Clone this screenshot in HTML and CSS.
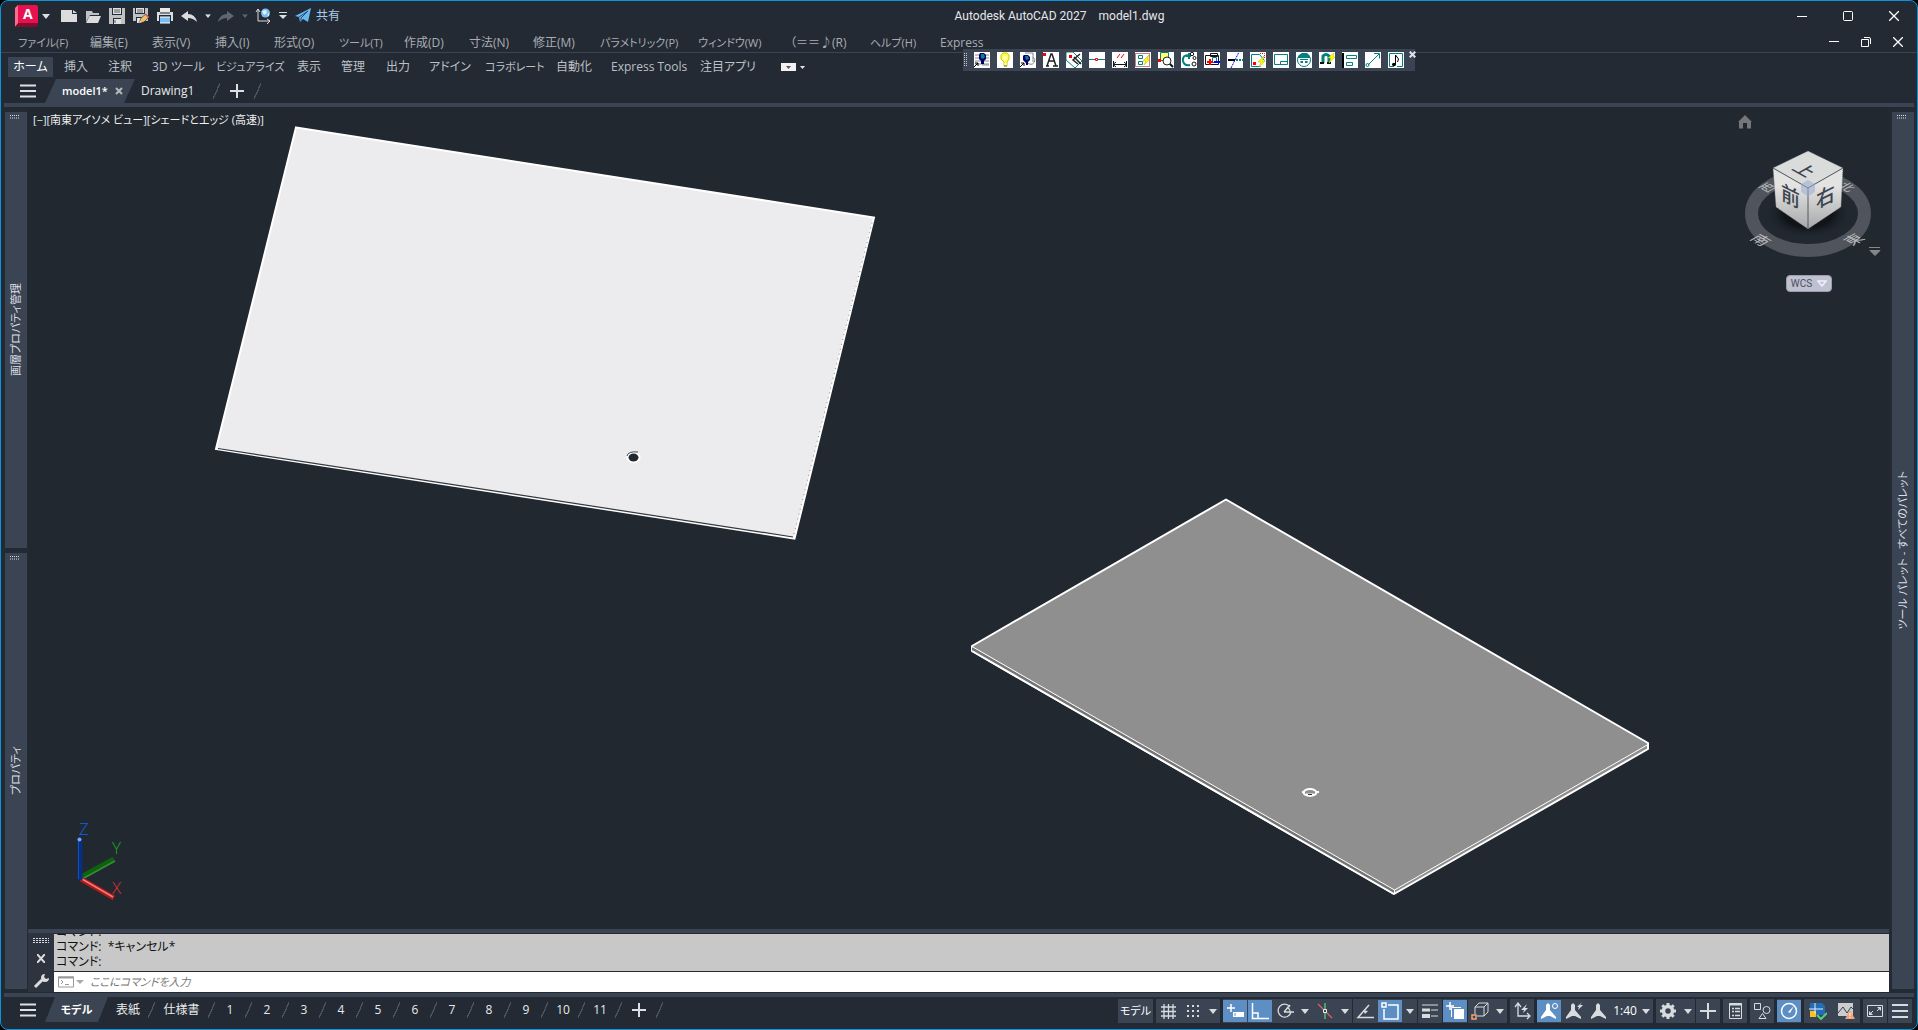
FILE: index.html
```html
<!DOCTYPE html>
<html lang="ja">
<head>
<meta charset="utf-8">
<title>Autodesk AutoCAD 2027 model1.dwg</title>
<link rel="stylesheet" href="styles.css">
</head>
<body>
<svg class="defs" aria-hidden="true">
  <symbol id="down" viewBox="0 0 8 5"><path d="M0 0h8L4 5z" fill="currentColor"/></symbol>
  <symbol id="bars" viewBox="0 0 16 14"><path d="M0 1.500h16M0 7h16M0 12.500h16" stroke="currentColor" stroke-width="2"/></symbol>
  <symbol id="plus" viewBox="0 0 14 14"><path d="M7 0v14M0 7h14" stroke="currentColor" stroke-width="2"/></symbol>
  <symbol id="cross" viewBox="0 0 10 10"><path d="M0 0L10 10M10 0L0 10" stroke="currentColor" stroke-width="1.300"/></symbol>
  <symbol id="grip" viewBox="0 0 10 4"><path d="M0 .5h10M0 3h10" stroke="currentColor" stroke-dasharray="1 1"/></symbol>
  <symbol id="person" viewBox="0 0 18 18"><path d="M8 1l2 2v5l6 7v2l-6-3H7l-6 3v-2l5-7V3z" fill="currentColor"/></symbol>
</svg>
<div class="window">
  <header class="titlebar">
    <button class="logo" aria-label="アプリケーション メニュー"><svg width="24" height="23" viewBox="0 0 24 23"><path d="M0 3l3-3v19l-3 3z" fill="#ff6b8b"/><path d="M3 0h18q2 0 2 2v16H3z" fill="#e8114f"/><path d="M0 22l3-4h20v2q0 2-2 2z" fill="#820b30"/><text x="8" y="14" class="logo-letter">A</text></svg></button>
    <button class="drop" aria-label="メニュー"><svg width="8" height="5"><use href="#down"/></svg></button>
    <div class="quick">
      <button aria-label="新規"><svg viewBox="0 0 16 16"><path d="M0 2h11v4h5v8H0z" fill="#dcdcdc"/><path d="M12 2l4 3h-4z" fill="#dcdcdc"/></svg></button>
      <button aria-label="開く"><svg viewBox="0 0 16 16"><path d="M1 14V3h6l1 2h6v2H5z" fill="#bfc1c4"/><path d="M4.500 8H16l-3 7H1z" fill="#dcdcdc"/></svg></button>
      <button aria-label="保存"><svg viewBox="0 0 16 16"><path d="M0 0h16v16H0z" fill="#bfc1c4"/><path d="M3 0h10v7H3zM4 10h8v6H4z" fill="#232a34"/><path d="M4 0h8v6H4zM5 11h7v5H5z" fill="#e2e2e2"/><path d="M5 2h6M5 4h6M6 12v3" stroke="#555c66"/></svg></button>
      <button aria-label="名前を付けて保存"><svg viewBox="0 0 16 16"><path d="M0 0h15v13H0z" fill="#bfc1c4"/><path d="M2 0h10v6H2zM3 9h7v6H3z" fill="#232a34"/><path d="M3 0h8v5H3zM4 10h5v5H4z" fill="#e2e2e2"/><path d="M4 2h6M4 4h6" stroke="#555c66"/><path d="M6 15l2-5 5-4 3 3-5 5z" fill="#f1bc65" stroke="#232a34" stroke-width=".6"/><path d="M12 7l1-1 3 3-1 1z" fill="#ed5b65"/><path d="M6 15l1-2 1 1z" fill="#fff"/></svg></button>
      <button aria-label="印刷"><svg viewBox="0 0 16 16"><path d="M3 0h10v5H3z" fill="#e8e8e8"/><path d="M0 4h16v9H0z" fill="#dedede"/><path d="M2 7h12v9H2z" fill="#232a34"/><path d="M3 5h10" stroke="#232a34"/><path d="M3 9h10v6H3z" fill="#78bdf4"/><path d="M3 9h10M3 15h10" stroke="#fff"/></svg></button>
      <button aria-label="元に戻す"><svg viewBox="0 0 16 16"><path d="M0 8l7-5v3q7 0 9 8-4-4-9-4v3z" fill="#dcdcdc"/></svg></button>
      <button class="small" aria-label="履歴"><svg viewBox="0 0 8 5"><use href="#down"/></svg></button>
      <button class="muted" aria-label="やり直し"><svg viewBox="0 0 16 16"><path d="M16 8L9 3v3Q2 6 0 14q4-4 9-4v3z" fill="currentColor"/></svg></button>
      <button class="small muted" aria-label="履歴"><svg viewBox="0 0 8 5"><use href="#down"/></svg></button>
      <button aria-label="UCS ワールド"><svg viewBox="0 0 16 16"><circle cx="10.500" cy="5" r="4.500" fill="#79bfed"/><path d="M7 3l4-1 1 3-3 2zM12 7l2-2v3z" fill="#dff2ff"/><path d="M3 1v12h12M1 4l2-3 2 3M12 11l3 2-3 3" fill="none" stroke="#dcdcdc"/></svg></button>
      <button class="custom" aria-label="カスタマイズ"><svg viewBox="0 0 8 8"><path d="M0 .5h8" stroke="currentColor"/><path d="M0 3h8L4 7z" fill="currentColor"/></svg></button>
      <button class="share"><svg viewBox="0 0 16 16"><path d="M0 8L16 0l-3 14-5-3-3 3-1-5z" fill="#69b8f0"/><path d="M4 9l9-6-7 7v4" fill="none" stroke="#235075"/></svg>共有</button>
    </div>
    <h1 class="caption"><span>Autodesk AutoCAD 2027</span><span>model1.dwg</span></h1>
    <div class="winctl">
      <button aria-label="最小化"><svg width="10" height="10"><path d="M0 5.500h10" stroke="#fff"/></svg></button>
      <button aria-label="最大化"><svg width="10" height="10"><rect x=".5" y=".5" width="9" height="9" rx="1" fill="none" stroke="#fff"/></svg></button>
      <button aria-label="閉じる"><svg width="10" height="10"><use href="#cross"/></svg></button>
    </div>
  </header>

  <nav class="menubar">
    <div class="menus">
      <button class="kana">ファイル(F)</button><button>編集(E)</button><button>表示(V)</button><button>挿入(I)</button><button>形式(O)</button><button class="kana">ツール(T)</button><button>作成(D)</button><button>寸法(N)</button><button>修正(M)</button><button class="kana">パラメトリック(P)</button><button class="kana">ウィンドウ(W)</button><button class="face">（＝＝♪(R)</button><button class="kana">ヘルプ(H)</button><button>Express</button>
    </div>
    <div class="winctl docctl">
      <button aria-label="最小化"><svg width="10" height="10"><path d="M0 4.500h10" stroke="#fff"/></svg></button>
      <button aria-label="元に戻す"><svg width="10" height="10"><path d="M.5 2.500h7v7h-7zM3 .5h5q1.500 0 1.500 1.500v5" fill="none" stroke="#fff"/></svg></button>
      <button aria-label="閉じる"><svg width="10" height="10"><use href="#cross"/></svg></button>
    </div>
    <div class="floatbar">
      <svg class="bargrip" width="3" height="14"><path d="M.5 0v14M2.500 0v14" stroke="#c9ccd1" stroke-dasharray="1 1"/></svg>
      <button aria-label="画層 1"><svg viewBox="0 0 16 16"><path d="M1 3h14M1 6h14M1 9h14M1 12h14M8 13h7" stroke="#888"/><path d="M6 1h4l2 2v4l-2 2v3H7v-3L5 7V3z" fill="#00006e"/><path d="M7 2h3l1 3-2 2-2-1z" fill="#078485"/><path d="M0 15l4-4M1 11h3v3" stroke="#000" fill="none"/></svg></button>
      <button aria-label="点灯"><svg viewBox="0 0 16 16"><path d="M6 1h4l2 2v4l-2 3v4H7v-4L4 7V3z" fill="#ffff5a" stroke="#caca00"/><path d="M6 5h4M6 7h4M7 12h3" stroke="#fff"/><path d="M7 14h3" stroke="#777"/></svg></button>
      <button aria-label="画層 2"><svg viewBox="0 0 16 16"><path d="M5 1h8v9M7 7a4 4 0 1 0 6-2" stroke="#888" fill="none"/><path d="M4 3h4l2 2v3l-2 2v3H6v-2L3 8V4z" fill="#00006e"/><path d="M5 4h3l1 3-3 1z" fill="#078485"/><path d="M0 15l4-4M1 11h3v3" stroke="#000" fill="none"/></svg></button>
      <button aria-label="文字"><svg viewBox="0 0 16 16"><path d="M0 1h3v3H0z" fill="#f00"/><path d="M3 14h3M10 14h5M4 14L8 2h1l4 12M6 9h5" stroke="#222" fill="none" stroke-width="1.500"/></svg></button>
      <button aria-label="回転"><svg viewBox="0 0 16 16"><path d="M0 0h7l9 9-7 7-9-8z" fill="#fff" stroke="#058080"/><path d="M14 2L7 8l5 4M8 5l7 7" stroke="#222" fill="none" stroke-width="1.500"/><path d="M3 3h3v3H3z" fill="#f00"/></svg></button>
      <button aria-label="中点"><svg viewBox="0 0 16 16"><path d="M0 7.500h16" stroke="#058080"/><path d="M6.500 6.500h2v2h-2z" fill="#fff" stroke="red"/></svg></button>
      <button aria-label="寸法"><svg viewBox="0 0 16 16"><path d="M1.500 9v6M14.500 9v6M2 12.500h12M4 10l-3 2.500L4 15M12 10l3 2.500-3 2.500" fill="none" stroke="#111"/><path d="M5 6l3-4M9 6l3-4" stroke="red"/></svg></button>
      <button aria-label="選択"><svg viewBox="0 0 16 16"><path d="M.5 1.500h14v13H.5z" fill="none" stroke="#8a0000" stroke-dasharray="1 1"/><path d="M3.500 3.500h4v3h-4zM3.500 9.500h4v3h-4z" fill="none" stroke="#058080"/><path d="M14 3L8 9h3l-2 4 6-6h-3z" fill="#ff0" stroke="#b5b500" stroke-width=".5"/></svg></button>
      <button aria-label="検索"><svg viewBox="0 0 16 16"><path d="M2.500.5h8v8h-8z" fill="#ffff70" stroke="#058080"/><circle cx="9" cy="9" r="4" fill="#fff" stroke="#222"/><path d="M12 12l3 3" stroke="#111" stroke-width="2"/><path d="M0 7h3v3H0z" fill="red"/></svg></button>
      <button aria-label="更新"><svg viewBox="0 0 16 16"><path d="M8 3Q1 3 2 9q1 5 7 4M8 1v6M5 4h5" fill="none" stroke="#058080" stroke-width="2"/><circle cx="11" cy="2" r="1.700" fill="none" stroke="#111"/><circle cx="13.500" cy="6" r="1.500" fill="none" stroke="#111"/><circle cx="13" cy="12" r="2" fill="none" stroke="#111"/></svg></button>
      <button aria-label="追加"><svg viewBox="0 0 16 16"><path d="M1.500 3.500h13v9h-13zM6.500 1.500h7v3h-7z" fill="none" stroke="#111"/><path d="M8.500 5.500h4v5h-4z" fill="#fff" stroke="#058080"/><path d="M6 7v6M3 10h6" stroke="red" stroke-width="2"/><path d="M10 10h6" stroke="#00f" stroke-width="2"/></svg></button>
      <button aria-label="切断"><svg viewBox="0 0 16 16"><path d="M1 8h7" stroke="#000" stroke-width="2"/><path d="M9 8h7" stroke="#058080" stroke-width="2" stroke-dasharray="2 1"/><path d="M4 16L12 0" stroke="#00d" stroke-dasharray="2 1"/></svg></button>
      <button aria-label="図形選択"><svg viewBox="0 0 16 16"><path d="M1.500 2.500h8l5 6M1.500 2.500v12h9" fill="none" stroke="#058080"/><path d="M10 1.500h4.500v5" fill="none" stroke="red" stroke-dasharray="1 1"/><path d="M14 4L8 10h3l-2 5 6-6h-3z" fill="#ff0" stroke="#b5b500" stroke-width=".5"/><path d="M3 10h3v3H3z" fill="red"/></svg></button>
      <button aria-label="図面枠"><svg viewBox="0 0 16 16"><path d="M1.500 2.500h13v10h-13zM7.500 12V9.500h7" fill="none" stroke="#058080"/></svg></button>
      <button aria-label="キャラクター"><svg viewBox="0 0 16 16"><circle cx="8" cy="8" r="6.500" fill="#fff" stroke="#058080"/><path d="M2 6V4l4-3h5l3 3v2z" fill="#058080"/><path d="M4 7.500h8" stroke="#058080"/><path d="M4.500 10h2.500M9 10h2.500" stroke="#058080" stroke-width="2"/></svg></button>
      <button aria-label="磁石"><svg viewBox="0 0 16 16"><path d="M4 11V4q3-3 6 0v7" fill="none" stroke="#058080" stroke-width="3"/><path d="M1 11h4M8 11h4" stroke="#111" stroke-width="2"/><path d="M15 1L9 6h3l-2 5 6-6h-2z" fill="#ff0" stroke="#c5c500" stroke-width=".5"/></svg></button>
      <button aria-label="整列"><svg viewBox="0 0 16 16"><path d="M1 1v15" stroke="#000" stroke-width="2"/><path d="M4.500 3.500h10v3h-10zM4.500 10.500h6v3h-6z" fill="none" stroke="#058080"/></svg></button>
      <button aria-label="矢印"><svg viewBox="0 0 16 16"><path d="M3 13L14 2M9 1.500h5.500v5" fill="none" stroke="#058080"/><circle cx="2.500" cy="13" r="1.500" fill="none" stroke="#058080"/></svg></button>
      <button aria-label="音符"><svg viewBox="0 0 16 16"><path d="M6 14.500H1.500v-13h13v13H9" fill="none" stroke="#058080"/><path d="M7.500 12V3l3 4-1 3" fill="none" stroke="#000"/><ellipse cx="6" cy="12.500" rx="2" ry="1.800"/></svg></button>
      <button class="barclose" aria-label="閉じる"><svg viewBox="0 0 10 10"><path d="M1 1l8 8M9 1L1 9" stroke="currentColor" stroke-width="3"/></svg></button>
    </div>
  </nav>

  <nav class="ribbon">
    <button class="on">ホーム</button><button>挿入</button><button>注釈</button><button>3D ツール</button><button class="kana">ビジュアライズ</button><button>表示</button><button>管理</button><button>出力</button><button>アドイン</button><button class="kana">コラボレート</button><button>自動化</button><button>Express Tools</button><button>注目アプリ</button>
    <button class="ribbonmin" aria-label="リボンを最小化"><svg width="25" height="8"><path d="M0 0h15v8H0z" fill="#f2f2f2"/><path d="M5 3h5L7.500 6z" fill="#555"/><path d="M19 3h5l-2.500 3z" fill="#e5e5e5"/></svg></button>
  </nav>

  <nav class="doctabs">
    <button class="burger" aria-label="図面メニュー"><svg width="16" height="14"><use href="#bars"/></svg></button>
    <button class="tab on">model1*<svg width="8" height="8"><path d="M1 1l6 6M7 1L1 7" stroke="#b5b9be" stroke-width="2"/></svg></button>
    <button class="tab drawing">Drawing1</button>
    <i class="slash"></i>
    <button class="add" aria-label="新規図面"><svg width="14" height="14"><use href="#plus"/></svg></button>
    <i class="slash"></i>
  </nav>
  <div class="strip"></div>

  <main class="workspace">
    <div class="dock">
      <aside class="palette"><svg width="10" height="4"><use href="#grip"/></svg><span>画層プロパティ管理</span></aside>
      <aside class="palette"><svg width="10" height="4"><use href="#grip"/></svg><span>プロパティ</span></aside>
    </div>
    <div class="center">
      <section class="viewport">
        <svg class="drawing-area" viewBox="28 107 1861 822" preserveAspectRatio="xMinYMin meet">
          <path d="M296 127.500L874 217.500 794.500 538.500 216 449z" fill="#ececee" stroke="#fff" stroke-width="2"/>
          <path d="M218 448.500L793 537" stroke="#33383e" stroke-width="1.200"/>
          <path d="M794 534L873 219" stroke="#8d8d90" stroke-width="1" stroke-dasharray="1 4"/>
          <ellipse cx="633.500" cy="457.500" rx="7" ry="5.500" fill="#fff"/>
          <ellipse cx="633.500" cy="457.500" rx="5" ry="4" fill="#212830"/>
          <path d="M627 456q1-5 11-4" fill="none" stroke="#444"/>
          <path d="M1226 499.500L1648 743v6l-254 145L972 651v-5z" fill="#8f8f8f" stroke="#fff" stroke-width="2" stroke-linejoin="round"/>
          <path d="M972 647l422 243v4L972 651z" fill="#747474"/>
          <path d="M972 646.500L1394.500 890 1648 744.500M1394.500 890v4" fill="none" stroke="#fff"/>
          <path d="M972 651L1394 894" stroke="#fff" stroke-width="2"/>
          <ellipse cx="1310" cy="792.500" rx="6.500" ry="3.500" fill="#8f8f8f" stroke="#fff" stroke-width="2"/>
          <path d="M1302 792h3M1315 792h4M1306 794.500h8" stroke="#fff" stroke-width="2"/><path d="M1308 794.500h4" stroke="#333"/>
          <path d="M81 877L114 859" stroke="#0d620d" stroke-width="5"/><path d="M84 878L115 861" stroke="#398b39" stroke-width="1.500"/>
          <path d="M81 879L114 898" stroke="#a41c1c" stroke-width="5"/><path d="M82 879L113 897" stroke="#ff7777" stroke-width="1.500"/>
          <path d="M80 839v41" stroke="#082e80" stroke-width="5"/><path d="M78.500 839v40" stroke="#1550b5"/><circle cx="79.500" cy="839.500" r="2" fill="#78a7ee"/>
          <g class="axis"><text x="79" y="835" fill="#0a63f5">Z</text><text x="112" y="854" fill="#17a817">Y</text><text x="112" y="894" fill="#df3030">X</text></g>
        </svg>
        <button class="viewlabel">[−][南東アイソメ ビュー][シェードとエッジ (高速)]</button>
        <div class="navcube">
          <svg class="cube" width="146" height="150" viewBox="1736 112 146 150">
            <defs><radialGradient id="glow"><stop offset=".55" stop-color="#101418"/><stop offset="1" stop-color="#212830" stop-opacity="0"/></radialGradient><linearGradient id="face" x2="0" y2="1"><stop offset=".3" stop-color="#e3e3e2"/><stop offset="1" stop-color="#a7a8a9"/></linearGradient></defs>
            <path d="M1738 122l7-7 7 7h-1v6.500h-4V123h-4v5.500h-4V122z" fill="#75777b"/>
            <ellipse cx="1808" cy="213.500" rx="56.500" ry="37" fill="none" stroke="#50545c" stroke-width="13"/>
            <ellipse cx="1808" cy="213" rx="44" ry="26" fill="url(#glow)"/>
            <g class="compass"><text class="far" transform="matrix(.75 -.42 .75 .42 1766 193)">西</text><text class="far" transform="matrix(.75 .42 -.75 .42 1837 186)">北</text><text transform="matrix(.75 .42 -.75 .42 1749 239)">南</text><text transform="matrix(.75 -.42 .75 .42 1852 246)">東</text></g>
            <path d="M1808 151l35 17-35 20-35-20z" fill="#dadcdb"/><path d="M1773 168l35 20v41l-32-22z" fill="url(#face)"/><path d="M1843 168l-35 20v41l33-22z" fill="url(#face)"/>
            <path d="M1773 168l35 20 35-20M1808 188v41" fill="none" stroke="#555b62"/>
            <path d="M1773 168l35-17 35 17-2 39-33 22-32-22z" fill="none" stroke="#656b72" stroke-width=".7" stroke-dasharray="1 1"/>
            <g class="facename"><text transform="matrix(.9 .45 0 1 1781 199)">前</text><text transform="matrix(.9 -.45 0 1 1816 209)">右</text><text transform="matrix(.75 .42 -.75 .42 1791 169)">上</text></g>
            <path d="M1808 180l7 4v8l-7 4-7-4v-8z" fill="#98acd0" opacity=".55"/>
            <path d="M1869 247.500h11M1870 250.500h10l-5 5z" fill="#85878a" stroke="#85878a"/>
          </svg>
          <button class="wcs">WCS<svg width="10" height="7"><path d="M1 1h8L5 6z" fill="none" stroke="#eef" stroke-width="1.500"/></svg></button>
        </div>
      </section>
      <section class="command">
        <div class="cmdtools">
          <svg width="18" height="5"><path d="M1 .5h16M1 2.500h16M1 4.500h16" stroke="#d5d7da" stroke-dasharray="2 1"/></svg>
          <button aria-label="閉じる"><svg width="8" height="9"><path d="M0 0l8 9M8 0L0 9" stroke="#ddd" stroke-width="2"/></svg></button>
          <button aria-label="カスタマイズ"><svg width="16" height="16"><path d="M2 14l7-7" stroke="#ddd" stroke-width="3"/><path d="M8 5q0-4 4-4l-1 3 2 2 3-1q0 4-4 4-4 0-4-4" fill="#ddd"/></svg></button>
        </div>
        <div class="cmdmain">
          <div class="history"><p>コマンド:</p><p>コマンド:&nbsp; *キャンセル*</p><p>コマンド:</p></div>
          <div class="prompt"><svg width="26" height="12"><path d="M.5 1h15v10H.5z" fill="#fff" stroke="#999"/><path d="M0 1.500h16" stroke="#999" stroke-width="2"/><path d="M3 4l2 2-2 2M7 8.500h4" fill="none" stroke="#999"/><path d="M18 4h8l-4 4z" fill="#aaa"/></svg><input aria-label="コマンド" placeholder="ここにコマンドを入力"></div>
        </div>
      </section>
    </div>
    <div class="dock right">
      <aside class="palette"><svg width="10" height="4"><use href="#grip"/></svg><span>ツール パレット - すべてのパレット</span></aside>
    </div>
  </main>
  <div class="strip low"></div>

  <footer class="status">
    <nav class="layouts">
      <button class="burger" aria-label="レイアウト メニュー"><svg width="16" height="14"><use href="#bars"/></svg></button>
      <button class="tab on">モデル</button>
      <button class="tab paper">表紙</button><i class="slash"></i>
      <button class="tab spec">仕様書</button><i class="slash"></i>
      <button class="tab num">1</button><i class="slash"></i><button class="tab num">2</button><i class="slash"></i><button class="tab num">3</button><i class="slash"></i><button class="tab num">4</button><i class="slash"></i><button class="tab num">5</button><i class="slash"></i><button class="tab num">6</button><i class="slash"></i><button class="tab num">7</button><i class="slash"></i><button class="tab num">8</button><i class="slash"></i><button class="tab num">9</button><i class="slash"></i><button class="tab num">10</button><i class="slash"></i><button class="tab num">11</button><i class="slash"></i>
      <button class="add" aria-label="新規レイアウト"><svg width="14" height="14"><use href="#plus"/></svg></button><i class="slash"></i>
    </nav>
    <div class="tools">
      <button class="model">モデル</button>
      <div class="group"><button aria-label="グリッド"><svg viewBox="0 0 18 18"><path d="M5 2v15M9.500 2v15M14 2v15M2 5h15M2 9.500h15M2 14h15" stroke="currentColor" stroke-width="1.300"/></svg></button><button aria-label="スナップ"><svg viewBox="0 0 18 18"><path d="M3 4h13M3 9h13M3 14h13" stroke="currentColor" stroke-width="2" stroke-dasharray="2 3"/></svg></button><button class="arr" aria-label="オプション"><svg viewBox="0 0 8 5"><use href="#down"/></svg></button></div>
      <div class="group wide"><button class="act" aria-label="ダイナミック入力"><svg viewBox="0 0 18 18"><path d="M5 2v8M1 6h8" stroke="currentColor" stroke-width="1.500"/><path d="M7 10h11v5H7z" fill="currentColor"/><path d="M9 11v3" stroke="#5d8fc5"/></svg></button><button class="act" aria-label="直交モード"><svg viewBox="0 0 18 18"><path d="M1.500 1v15.500H18M2 11h5v5" fill="none" stroke="currentColor" stroke-width="1.500"/></svg></button><button aria-label="極トラッキング"><svg viewBox="0 0 18 18"><path d="M14 5a6.500 6.500 0 1 0 1 5M8 10h10M8 10l6-7M11 5q3 2 3 5" fill="none" stroke="currentColor" stroke-width="1.300"/></svg></button><button class="arr" aria-label="オプション"><svg viewBox="0 0 8 5"><use href="#down"/></svg></button><button aria-label="アイソメ"><svg viewBox="0 0 18 18"><path d="M2 2l14 14" stroke="#de5e63" stroke-width="1.300"/><path d="M9 1v16" stroke="#55cf7a" stroke-width="1.300"/><path d="M7.500 7.500h3v3h-3z" fill="#3b4453" stroke="#eee"/></svg></button><button class="arr" aria-label="オプション"><svg viewBox="0 0 8 5"><use href="#down"/></svg></button></div>
      <div class="group"><button aria-label="オブジェクト スナップ トラッキング"><svg viewBox="0 0 18 18"><path d="M18 15.500H2L13 3" fill="none" stroke="currentColor" stroke-width="1.500"/><path d="M7 8l5 1-3 3z" fill="currentColor"/></svg></button><button class="act" aria-label="オブジェクト スナップ"><svg viewBox="0 0 18 18"><path d="M7 3h10v14H3V7M1 1h4v4H1z" fill="none" stroke="currentColor" stroke-width="1.500"/></svg></button><button class="arr" aria-label="オプション"><svg viewBox="0 0 8 5"><use href="#down"/></svg></button></div>
      <div class="group"><button aria-label="線の太さ"><svg viewBox="0 0 18 18"><path d="M1 3h16M10 8h7M10 14h7" stroke="currentColor"/><path d="M1 8h8" stroke="currentColor" stroke-width="3"/><path d="M1 14h8" stroke="currentColor" stroke-width="4"/></svg></button></div>
      <div class="group"><button class="act" aria-label="選択の循環"><svg viewBox="0 0 18 18"><path d="M4 0v8M0 4h8" stroke="currentColor" stroke-width="1.500"/><path d="M8 7h10v10H8z" fill="currentColor"/><path d="M5.500 15V5.500H15" fill="none" stroke="currentColor"/></svg></button></div>
      <div class="group"><button aria-label="3D オブジェクト スナップ"><svg viewBox="0 0 18 18"><path d="M4 12V5h9v9H6M4 5l4-4h9l-4 4M17 1v9l-4 4" fill="none" stroke="currentColor"/><path d="M1 13h4v4H1z" fill="#3b4453" stroke="#f2a477" stroke-width="1.500"/></svg></button><button class="arr" aria-label="オプション"><svg viewBox="0 0 8 5"><use href="#down"/></svg></button></div>
      <div class="group wide"><button aria-label="ダイナミック UCS"><svg viewBox="0 0 18 18"><path d="M5 2v12h11M2 5l3-4 3 4M14 11l3 3-3 3" fill="none" stroke="currentColor" stroke-width="1.300"/><path d="M14 2L8 8h3l-1 3 5-5h-3z" fill="currentColor"/></svg></button></div>
      <div class="group wide"><button class="act" aria-label="注釈の表示"><svg viewBox="0 0 18 18"><use href="#person"/><circle cx="15" cy="4" r="2.500" fill="none" stroke="#fff"/></svg></button><button aria-label="自動尺度"><svg viewBox="0 0 18 18"><use href="#person"/><path d="M17 0l-5 5h2l-1 3 5-5h-3z" fill="currentColor"/></svg></button><button aria-label="注釈尺度"><svg viewBox="0 0 18 18"><use href="#person"/></svg></button><button class="scale">1:40</button><button class="arr" aria-label="オプション"><svg viewBox="0 0 8 5"><use href="#down"/></svg></button></div>
      <div class="group wide"><button aria-label="ワークスペース"><svg viewBox="0 0 18 18"><circle cx="9" cy="9" r="4.500" fill="none" stroke="currentColor" stroke-width="3.500"/><path d="M9 1v3M9 14v3M1 9h3M14 9h3M3.300 3.300l2 2M12.700 12.700l2 2M3.300 14.700l2-2M12.700 5.300l2-2" stroke="currentColor" stroke-width="3"/></svg></button><button class="arr" aria-label="オプション"><svg viewBox="0 0 8 5"><use href="#down"/></svg></button></div>
      <div class="group"><button aria-label="注釈モニター"><svg viewBox="0 0 18 18"><path d="M9 1v16M1 9h16" stroke="currentColor" stroke-width="2"/></svg></button></div>
      <div class="group wide"><button aria-label="クイック プロパティ"><svg viewBox="0 0 18 18"><path d="M3.500 1.500h12v15h-12z" fill="none" stroke="currentColor"/><path d="M3 2.500h13" stroke="currentColor" stroke-width="2"/><path d="M6 6.500h2M6 9.500h2M6 13.500h2M9 6.500h5M9 9.500h5M9 13.500h5" stroke="currentColor" stroke-width="1.500"/></svg></button></div>
      <div class="group wide"><button aria-label="選択表示"><svg viewBox="0 0 18 18"><path d="M1.500 1.500h6v6h-6zM6 16.500l3.500-5 3.500 5z" fill="none" stroke="currentColor"/><circle cx="13.500" cy="8" r="3.500" fill="none" stroke="currentColor"/></svg></button></div>
      <div class="group wide"><button class="act" aria-label="グラフィックス パフォーマンス"><svg viewBox="0 0 18 18"><circle cx="9" cy="9" r="7.500" fill="none" stroke="currentColor" stroke-width="1.500"/><path d="M8 10l6-6-4 7z" fill="currentColor"/></svg></button></div>
      <div class="group wide pair"><button aria-label="図面ステータス"><svg viewBox="0 0 18 18"><path d="M1 1h12l3 3v9H1z" fill="#246db6"/><path d="M1 9h6v6H1z" fill="#ffbd20"/><path d="M6 1v11M0 7h14" stroke="#dfefff"/><path d="M8 13l4 4 6-6" fill="none" stroke="#55ce7a" stroke-width="2"/></svg></button><button aria-label="パフォーマンス警告"><svg viewBox="0 0 18 18"><path d="M1 1h15v13H1z" fill="#ccc"/><path d="M1 11l5-6 4 6 4-6 3 3" fill="none" stroke="#344352"/><path d="M13 8l5 9H8z" fill="#f2a477"/><path d="M13 11v3M13 15v1" stroke="#fff"/></svg></button></div>
      <div class="group wide"><button aria-label="全画面表示"><svg viewBox="0 0 18 18"><path d="M1.500 3.500h15v11h-15z" fill="none" stroke="currentColor"/><path d="M11 5h4v4zM3 9v4h4z" fill="currentColor"/><path d="M5 11l2-2M13 7l-2 2" stroke="currentColor"/></svg></button></div>
      <div class="group"><button aria-label="カスタマイズ"><svg viewBox="0 0 18 18"><path d="M1 3h16M1 9h16M1 15h16" stroke="currentColor" stroke-width="2"/></svg></button></div>
    </div>
  </footer>
</div>
</body>
</html>
```
FILE: styles.css
```css
* { box-sizing: border-box; }
html, body { height: 100%; margin: 0; }
body { background: #000; font: 12px/16px "Open Sans", "Noto Sans CJK JP", sans-serif; font-feature-settings: "palt"; color: #dcdfe3; overflow: hidden; }
button { border: 0; padding: 0; margin: 0; background: none; color: inherit; font: inherit; font-feature-settings: inherit; white-space: nowrap; cursor: default; }
svg { display: block; flex: none; }
.defs { position: absolute; width: 0; height: 0; }
.kana { font-size: 11px; }

.window { height: 100vh; display: flex; flex-direction: column; background: #232a34; border: 1px solid #0a94dc; border-radius: 8px; overflow: hidden; }

.titlebar { height: 30px; flex: none; display: flex; align-items: center; }
.logo { margin-left: 14px; width: 24px; }
.logo-letter { font: bold 14px "Open Sans", sans-serif; fill: #fff; }
.drop { margin-left: 3px; width: 8px; }
.quick { display: flex; align-items: center; gap: 8px; margin-left: 11px; }
.quick button { width: 16px; }
.quick svg { width: 16px; height: 16px; }
.quick .small { width: 5px; }
.quick .small svg { width: 6px; height: 4px; }
.quick .custom { width: 8px; }
.quick .custom svg { width: 8px; height: 8px; }
.quick .muted { color: #61666e; }
.quick .share { display: flex; align-items: center; gap: 5px; width: auto; color: #a8cdec; }
.caption { flex: 1; display: flex; justify-content: center; gap: 12px; margin: 0; font: 400 12px/16px Roboto, sans-serif; color: #e6e8ea; }
.winctl { display: flex; color: #fff; }
.winctl button { width: 46px; height: 30px; display: grid; place-items: center; }

.menubar { position: relative; height: 22px; flex: none; display: flex; justify-content: space-between; align-items: center; border-bottom: 1px solid #3b4453; color: #a9adb3; }
.menus { display: grid; grid-template-columns: 72px 62px 63px 59px 65px 65px 65px 64px 67px 98px 92px 80px 70px auto; margin-left: 17px; padding-top: 2px; }
.menus button { text-align: left; }
.docctl { margin-right: 3px; }
.docctl button { width: 32px; height: 20px; }
.floatbar { position: absolute; left: 962px; top: 18px; z-index: 2; width: 452px; height: 22px; display: flex; align-items: center; gap: 7px; padding-left: 1px; background: #3b4453; }
.floatbar button { width: 16px; height: 16px; background: #fff; }
.floatbar button svg { width: 16px; height: 16px; }
.floatbar .barclose { width: 7px; height: 7px; margin: 2px 0 0 -2px; align-self: flex-start; background: none; color: #dfe1e4; }
.floatbar .barclose svg { width: 7px; height: 7px; }

.ribbon { height: 26px; flex: none; display: grid; grid-template-columns: 45px 44px 44px 64px 81px 44px 45px 43px 56px 71px 55px 89px 81px auto; justify-content: start; align-items: center; padding: 3px 0 1px 7px; color: #bcc0c5; }
.ribbon button { height: 20px; text-align: left; padding-left: 11px; }
.ribbon .on { background: #3b4453; color: #fff; padding: 0; text-align: center; }

.doctabs { height: 24px; flex: none; display: flex; align-items: center; }
.burger { width: 16px; margin-left: 19px; }
.tab { color: #e8eaec; }
.doctabs .tab.on { display: flex; align-items: center; justify-content: space-between; width: 90px; height: 24px; margin-left: 9px; padding: 0 12px 0 17px; background: #3b4453; clip-path: polygon(11px 0, 100% 0, 79px 100%, 0 100%); font-size: 11px; font-weight: 600; color: #fff; }
.drawing { margin-left: 6px; width: 63px; text-align: left; }
.slash { width: 7px; height: 16px; flex: none; background: linear-gradient(114deg, transparent 46%, #4a5362 46%, #4a5362 56%, transparent 56%); }
.doctabs .slash { margin-left: 9px; }
.add { width: 14px; margin-left: 10px; }
.add + .slash { margin-left: 10px; }

.strip { height: 4px; flex: none; margin: 0 3px; background: #3b4453; }
.workspace { flex: 1; min-height: 0; display: flex; justify-content: space-between; padding: 0 3px; }
.dock { width: 24px; flex: none; display: flex; flex-direction: column; gap: 5px; padding: 5px 1px 4px; }
.dock.right { width: 25px; padding: 5px 0 4px 3px; }
.palette { flex: 1; display: flex; align-items: center; justify-content: center; background: #3b4453; position: relative; font-size: 11px; }
.palette svg { position: absolute; top: 3px; left: 5px; }
.palette span { writing-mode: vertical-rl; text-orientation: sideways; transform: rotate(180deg); white-space: nowrap; }
.center { flex: 1; min-width: 0; display: flex; flex-direction: column; }
.viewport { flex: 1; min-height: 0; position: relative; background: #212830; overflow: hidden; }
.drawing-area { width: 100%; height: 100%; }
.axis { font: 300 17px "Open Sans", sans-serif; }
.viewlabel { position: absolute; left: 5px; top: 5px; color: #f0f0f0; font-size: 11px; }
.navcube { position: absolute; right: 7px; top: 5px; width: 146px; display: flex; flex-direction: column; align-items: center; gap: 13px; }
.compass { font: 18px "Noto Sans CJK JP", sans-serif; fill: #b7b9bb; }
.compass .far { font-size: 15px; }
.facename { font: 500 21px "Noto Sans CJK JP", sans-serif; fill: #3c4450; }
.wcs { width: 46px; height: 17px; display: flex; align-items: center; justify-content: center; gap: 5px; border: 1px solid #9c9db0; border-radius: 4px; background: #c0c1d0; color: #4c4e5c; font: 10px/14px Roboto, sans-serif; }

.command { flex: none; display: flex; border-top: 4px solid #3b4453; height: 64px; padding-bottom: 1px; }
.cmdtools { width: 26px; display: flex; flex-direction: column; align-items: center; justify-content: space-between; padding: 5px 0 3px; background: #2d3440; }
.cmdmain { flex: 1; min-width: 0; display: flex; flex-direction: column; gap: 1px; padding-top: 1px; }
.history { flex: 1; min-height: 0; display: flex; flex-direction: column; justify-content: flex-end; overflow: hidden; padding: 0 2px 2px; background: #c8c8c8; color: #111; }
.history p { margin: 0; flex: none; line-height: 15px; }
.prompt { height: 20px; flex: none; display: flex; align-items: center; gap: 6px; padding-left: 4px; background: #fff; }
.prompt input { flex: 1; border: 0; outline: 0; padding: 0; background: none; font: italic 11px/16px "Open Sans", "Noto Sans CJK JP", sans-serif; font-feature-settings: "palt"; }
.prompt input::placeholder { color: #777; opacity: 1; }

.status { height: 32px; flex: none; display: flex; justify-content: space-between; align-items: flex-start; padding-right: 5px; }
.layouts { display: flex; align-items: center; height: 25px; }
.layouts .tab.on { width: 63px; height: 25px; margin-left: 9px; background: #3b4453; clip-path: polygon(10px 0, 100% 0, 53px 100%, 0 100%); font-size: 11px; font-weight: 600; color: #fff; }
.paper { width: 40px; }
.spec { width: 53px; }
.num { width: 30px; }
.tools { display: flex; padding-top: 2px; gap: 1px; }
.model, .group { height: 24px; background: #3b4453; display: flex; align-items: center; }
.model { width: 35px; justify-content: center; margin-right: 2px; font-size: 11px; color: #fff; }
.group { gap: 1px; }
.group button { width: 24px; height: 22px; display: grid; place-items: center; color: #d9dcdf; }
.group button svg { width: 18px; height: 18px; }
.group .act { background: #5d8fc5; color: #fff; }
.group .arr { width: 14px; }
.group .arr svg { width: 8px; height: 5px; }
.group .scale { width: 26px; color: #fff; }
.wide { margin-left: 2px; }
.pair { gap: 4px; padding: 0 2px; }
```
